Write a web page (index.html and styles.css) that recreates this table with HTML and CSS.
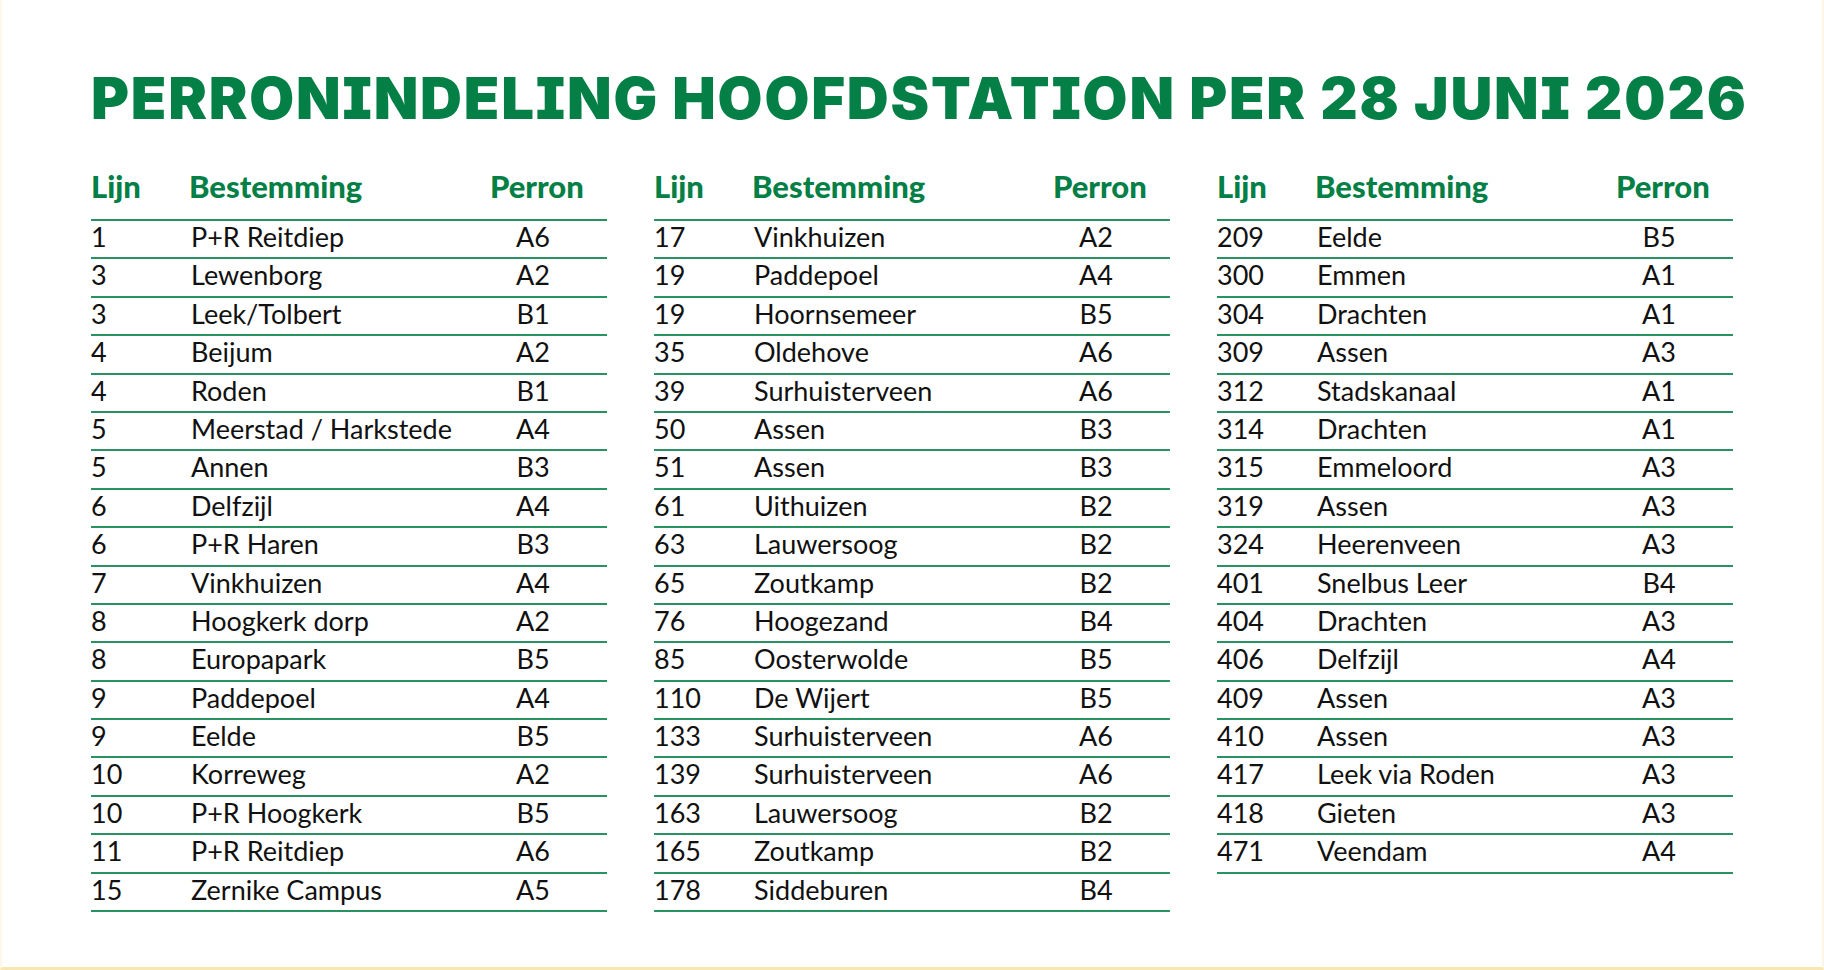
FILE: index.html
```html
<!DOCTYPE html>
<html lang="nl">
<head>
<meta charset="utf-8">
<title>Perronindeling Hoofdstation</title>
<link rel="stylesheet" href="styles.css">
</head>
<body>
<div class="page">
  <h1 class="title">PERRONINDELING HOOFDSTATION PER 28 JUNI 2026</h1>
  <div class="tables">
    <div class="table">
      <div class="row head"><span class="lijn">Lijn</span><span class="best">Bestemming</span><span class="perron">Perron</span></div>
      <div class="row"><span class="lijn">1</span><span class="best">P+R Reitdiep</span><span class="perron">A6</span></div>
      <div class="row"><span class="lijn">3</span><span class="best">Lewenborg</span><span class="perron">A2</span></div>
      <div class="row"><span class="lijn">3</span><span class="best">Leek/Tolbert</span><span class="perron">B1</span></div>
      <div class="row"><span class="lijn">4</span><span class="best">Beijum</span><span class="perron">A2</span></div>
      <div class="row"><span class="lijn">4</span><span class="best">Roden</span><span class="perron">B1</span></div>
      <div class="row"><span class="lijn">5</span><span class="best">Meerstad / Harkstede</span><span class="perron">A4</span></div>
      <div class="row"><span class="lijn">5</span><span class="best">Annen</span><span class="perron">B3</span></div>
      <div class="row"><span class="lijn">6</span><span class="best">Delfzijl</span><span class="perron">A4</span></div>
      <div class="row"><span class="lijn">6</span><span class="best">P+R Haren</span><span class="perron">B3</span></div>
      <div class="row"><span class="lijn">7</span><span class="best">Vinkhuizen</span><span class="perron">A4</span></div>
      <div class="row"><span class="lijn">8</span><span class="best">Hoogkerk dorp</span><span class="perron">A2</span></div>
      <div class="row"><span class="lijn">8</span><span class="best">Europapark</span><span class="perron">B5</span></div>
      <div class="row"><span class="lijn">9</span><span class="best">Paddepoel</span><span class="perron">A4</span></div>
      <div class="row"><span class="lijn">9</span><span class="best">Eelde</span><span class="perron">B5</span></div>
      <div class="row"><span class="lijn">10</span><span class="best">Korreweg</span><span class="perron">A2</span></div>
      <div class="row"><span class="lijn">10</span><span class="best">P+R Hoogkerk</span><span class="perron">B5</span></div>
      <div class="row"><span class="lijn">11</span><span class="best">P+R Reitdiep</span><span class="perron">A6</span></div>
      <div class="row"><span class="lijn">15</span><span class="best">Zernike Campus</span><span class="perron">A5</span></div>
    </div>
    <div class="table">
      <div class="row head"><span class="lijn">Lijn</span><span class="best">Bestemming</span><span class="perron">Perron</span></div>
      <div class="row"><span class="lijn">17</span><span class="best">Vinkhuizen</span><span class="perron">A2</span></div>
      <div class="row"><span class="lijn">19</span><span class="best">Paddepoel</span><span class="perron">A4</span></div>
      <div class="row"><span class="lijn">19</span><span class="best">Hoornsemeer</span><span class="perron">B5</span></div>
      <div class="row"><span class="lijn">35</span><span class="best">Oldehove</span><span class="perron">A6</span></div>
      <div class="row"><span class="lijn">39</span><span class="best">Surhuisterveen</span><span class="perron">A6</span></div>
      <div class="row"><span class="lijn">50</span><span class="best">Assen</span><span class="perron">B3</span></div>
      <div class="row"><span class="lijn">51</span><span class="best">Assen</span><span class="perron">B3</span></div>
      <div class="row"><span class="lijn">61</span><span class="best">Uithuizen</span><span class="perron">B2</span></div>
      <div class="row"><span class="lijn">63</span><span class="best">Lauwersoog</span><span class="perron">B2</span></div>
      <div class="row"><span class="lijn">65</span><span class="best">Zoutkamp</span><span class="perron">B2</span></div>
      <div class="row"><span class="lijn">76</span><span class="best">Hoogezand</span><span class="perron">B4</span></div>
      <div class="row"><span class="lijn">85</span><span class="best">Oosterwolde</span><span class="perron">B5</span></div>
      <div class="row"><span class="lijn">110</span><span class="best">De Wijert</span><span class="perron">B5</span></div>
      <div class="row"><span class="lijn">133</span><span class="best">Surhuisterveen</span><span class="perron">A6</span></div>
      <div class="row"><span class="lijn">139</span><span class="best">Surhuisterveen</span><span class="perron">A6</span></div>
      <div class="row"><span class="lijn">163</span><span class="best">Lauwersoog</span><span class="perron">B2</span></div>
      <div class="row"><span class="lijn">165</span><span class="best">Zoutkamp</span><span class="perron">B2</span></div>
      <div class="row"><span class="lijn">178</span><span class="best">Siddeburen</span><span class="perron">B4</span></div>
    </div>
    <div class="table">
      <div class="row head"><span class="lijn">Lijn</span><span class="best">Bestemming</span><span class="perron">Perron</span></div>
      <div class="row"><span class="lijn">209</span><span class="best">Eelde</span><span class="perron">B5</span></div>
      <div class="row"><span class="lijn">300</span><span class="best">Emmen</span><span class="perron">A1</span></div>
      <div class="row"><span class="lijn">304</span><span class="best">Drachten</span><span class="perron">A1</span></div>
      <div class="row"><span class="lijn">309</span><span class="best">Assen</span><span class="perron">A3</span></div>
      <div class="row"><span class="lijn">312</span><span class="best">Stadskanaal</span><span class="perron">A1</span></div>
      <div class="row"><span class="lijn">314</span><span class="best">Drachten</span><span class="perron">A1</span></div>
      <div class="row"><span class="lijn">315</span><span class="best">Emmeloord</span><span class="perron">A3</span></div>
      <div class="row"><span class="lijn">319</span><span class="best">Assen</span><span class="perron">A3</span></div>
      <div class="row"><span class="lijn">324</span><span class="best">Heerenveen</span><span class="perron">A3</span></div>
      <div class="row"><span class="lijn">401</span><span class="best">Snelbus Leer</span><span class="perron">B4</span></div>
      <div class="row"><span class="lijn">404</span><span class="best">Drachten</span><span class="perron">A3</span></div>
      <div class="row"><span class="lijn">406</span><span class="best">Delfzijl</span><span class="perron">A4</span></div>
      <div class="row"><span class="lijn">409</span><span class="best">Assen</span><span class="perron">A3</span></div>
      <div class="row"><span class="lijn">410</span><span class="best">Assen</span><span class="perron">A3</span></div>
      <div class="row"><span class="lijn">417</span><span class="best">Leek via Roden</span><span class="perron">A3</span></div>
      <div class="row"><span class="lijn">418</span><span class="best">Gieten</span><span class="perron">A3</span></div>
      <div class="row"><span class="lijn">471</span><span class="best">Veendam</span><span class="perron">A4</span></div>
    </div>
  </div>
</div>
</body>
</html>
```

FILE: styles.css
```css
html, body {
  margin: 0;
  padding: 0;
  background: #ffffff;
}

.page {
  box-sizing: border-box;
  width: 1824px;
  height: 970px;
  padding: 69px 0 0 89px;
  border-left: 2px solid #fdf8ea;
  border-right: 2px solid #fdf6e4;
  border-bottom: 3px solid #f9e6b0;
  font-family: Lato, "Liberation Sans", sans-serif;
  color: #111111;
}

.title {
  margin: 0;
  font-family: Inter, "DejaVu Sans", sans-serif;
  font-weight: 900;
  font-size: 58px;
  line-height: 58px;
  letter-spacing: 1.8px;
  color: #047f46;
  white-space: nowrap;
  font-feature-settings: "cv08" 1;
}

.tables {
  display: grid;
  grid-template-columns: 516px 516px 516px;
  column-gap: 47px;
  align-items: start;
  margin-top: 45px;
}

.row {
  display: grid;
  grid-template-columns: 100px 300px 84px;
  height: 38.4px;
  box-sizing: border-box;
  border-bottom: 2px solid #2a9160;
  font-size: 27px;
  line-height: 32px;
}

.row .perron {
  text-align: center;
}

.row.head {
  height: auto;
  padding-bottom: 19px;
  font-weight: 900;
  font-size: 31px;
  line-height: 28px;
  color: #047f46;
}

.row.head .best {
  margin-left: -2px;
}

.row.head .perron {
  text-align: left;
  margin-left: -1px;
}
```
